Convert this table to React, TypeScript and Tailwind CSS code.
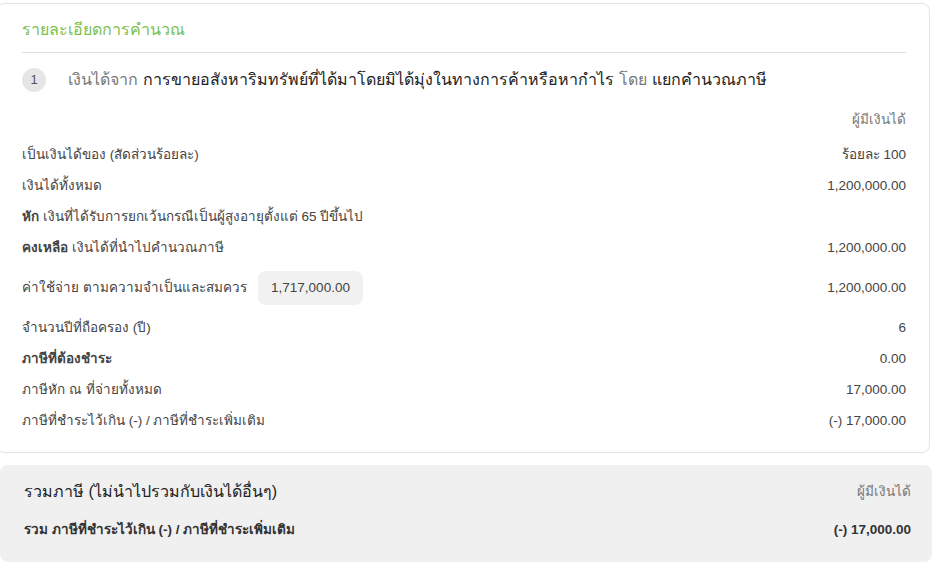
import { type ReactNode } from "react"

interface RowProps {
  label: ReactNode
  value: ReactNode
  bold?: boolean
}

function Row({ label, value, bold }: RowProps) {
  return (
    <div className={`flex h-[31.25px] items-center justify-between ${bold ? "font-bold" : ""}`}>
      <div>{label}</div>
      <div>{value}</div>
    </div>
  )
}

export default function App() {
  return (
    <div
      className="w-[940px] h-[571px] overflow-hidden bg-white text-[13.5px] text-[#444]"
      style={{ fontFamily: '"Liberation Sans", "Noto Sans", sans-serif' }}
    >
      <div className="ml-[-4px] mt-[3px] w-[934px] rounded-lg border border-[#e3e3e3] pl-[25px] pr-[23px] pt-[16px] pb-[15px]">
        <h2 className="text-[16px] leading-[20px] text-[#7bbf4e] pb-[12px] border-b border-[#dedede]">
          รายละเอียดการคำนวณ
        </h2>
        <div className="flex items-center h-[24px] mt-[15px] text-[16px]">
          <span className="flex h-[24px] w-[24px] items-center justify-center rounded-full bg-[#e6e6e6] text-[13px] text-[#555]">
            1
          </span>
          <span className="ml-[22px] text-[#777]">เงินได้จาก</span>
          <span className="ml-[5px] text-[#222]">การขายอสังหาริมทรัพย์ที่ได้มาโดยมิได้มุ่งในทางการค้าหรือหากำไร</span>
          <span className="ml-[5px] text-[#777]">โดย</span>
          <span className="ml-[5px] text-[#222]">แยกคำนวณภาษี</span>
        </div>
        <div className="mt-[16px] flex h-[24px] items-center justify-end text-[#777]">ผู้มีเงินได้</div>
        <div className="mt-[7px]">
          <Row label="เป็นเงินได้ของ (สัดส่วนร้อยละ)" value="ร้อยละ 100" />
          <Row label="เงินได้ทั้งหมด" value="1,200,000.00" />
          <Row label={<><b>หัก</b> เงินที่ได้รับการยกเว้นกรณีเป็นผู้สูงอายุตั้งแต่ 65 ปีขึ้นไป</>} value="" />
          <Row label={<><b>คงเหลือ</b> เงินได้ที่นำไปคำนวณภาษี</>} value="1,200,000.00" />
          <div className="flex h-[48px] items-center justify-between">
            <div className="flex items-center">
              <span className="w-[236px]">ค่าใช้จ่าย ตามความจำเป็นและสมควร</span>
              <span className="flex h-[34px] w-[105px] items-center justify-center rounded-lg bg-[#f1f1f1]">
                1,717,000.00
              </span>
            </div>
            <div>1,200,000.00</div>
          </div>
          <Row label="จำนวนปีที่ถือครอง (ปี)" value="6" />
          <Row label="ภาษีที่ต้องชำระ" value={<span className="font-normal">0.00</span>} bold />
          <Row label="ภาษีหัก ณ ที่จ่ายทั้งหมด" value="17,000.00" />
          <Row label="ภาษีที่ชำระไว้เกิน (-) / ภาษีที่ชำระเพิ่มเติม" value="(-) 17,000.00" />
        </div>
      </div>
      <div className="mt-[12px] w-[932px] rounded-lg bg-[#f0f0f0] pl-[24px] pr-[21px] pt-[15px] pb-[20px]">
        <div className="flex h-[24px] items-center justify-between">
          <span className="text-[16px] text-[#222]">รวมภาษี (ไม่นำไปรวมกับเงินได้อื่นๆ)</span>
          <span className="text-[#777]">ผู้มีเงินได้</span>
        </div>
        <div className="mt-[14px] flex h-[24px] items-center justify-between font-bold text-[#333]">
          <span>รวม ภาษีที่ชำระไว้เกิน (-) / ภาษีที่ชำระเพิ่มเติม</span>
          <span>(-) 17,000.00</span>
        </div>
      </div>
    </div>
  )
}
